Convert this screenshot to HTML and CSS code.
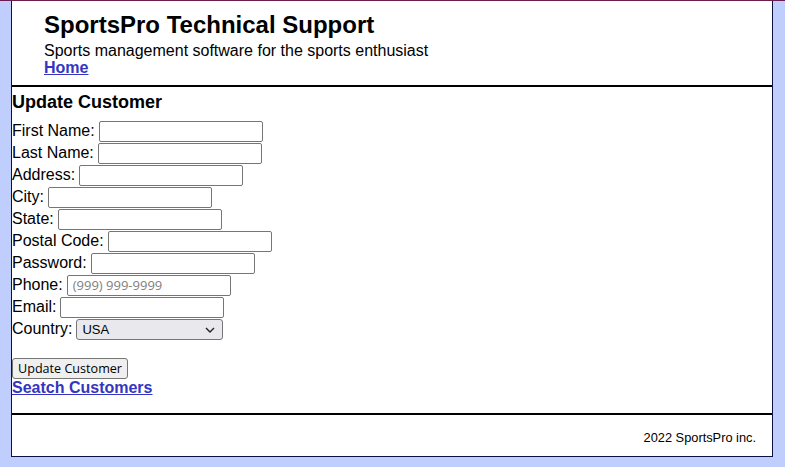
FILE: index.html
```html
<!DOCTYPE html>
<html lang="en">
<head>
<meta charset="utf-8">
<title>SportsPro Technical Support</title>
<link rel="stylesheet" href="styles.css">
</head>
<body>
<div class="page">
  <header class="site-header">
    <h1 class="site-title">SportsPro Technical Support</h1>
    <p class="tagline">Sports management software for the sports enthusiast</p>
    <a class="nav-link" href="#">Home</a>
  </header>
  <main class="content">
    <h2 class="page-title">Update Customer</h2>
    <form class="customer-form">
      <div class="row"><label>First Name:</label><input class="field f1" type="text"></div>
      <div class="row"><label>Last Name:</label><input class="field" type="text"></div>
      <div class="row"><label>Address:</label><input class="field" type="text"></div>
      <div class="row"><label>City:</label><input class="field" type="text"></div>
      <div class="row"><label>State:</label><input class="field" type="text"></div>
      <div class="row"><label>Postal Code:</label><input class="field" type="text"></div>
      <div class="row"><label>Password:</label><input class="field" type="password"></div>
      <div class="row"><label>Phone:</label><input class="field" type="text" placeholder="(999) 999-9999"></div>
      <div class="row"><label>Email:</label><input class="field" type="text"></div>
      <div class="row"><label>Country:</label>
        <span class="select-wrap">
          <select class="select"><option>USA</option></select>
          <svg class="chevron" width="10" height="6" viewBox="0 0 10 6"><path d="M1 1 L5 5 L9 1" fill="none" stroke="#222" stroke-width="1.4"/></svg>
        </span>
      </div>
      <button class="submit" type="button">Update Customer</button>
    </form>
    <a class="nav-link search-link" href="#">Seatch Customers</a>
  </main>
  <footer class="site-footer">
    <p class="copyright">2022 SportsPro inc.</p>
  </footer>
</div>
</body>
</html>
```

FILE: styles.css
```css
html, body {
  margin: 0;
  padding: 0;
}

body {
  background: #bfcefd;
  border-top: 1px solid #6d1c4e;
  font-family: "Liberation Sans", Arial, sans-serif;
  font-size: 16px;
  color: #000;
  height: 466px;
  overflow: hidden;
}

.page {
  margin-left: 11px;
  width: 760px;
  background: #fff;
  border: 1px solid #0b1240;
  border-top: none;
}

.site-header {
  padding: 10px 0 8px 32px;
  border-bottom: 2px solid #000;
}

.site-title {
  margin: 0;
  font-size: 24px;
  line-height: 28px;
  font-weight: bold;
}

.tagline {
  margin: 3px 0 0;
  line-height: 17px;
}

.nav-link {
  display: block;
  font-weight: bold;
  color: #3535bf;
  text-decoration: underline;
  line-height: 18px;
}

.content {
  padding: 5px 0 16px 0;
}

.page-title {
  margin: 0 0 7px;
  font-size: 18px;
  line-height: 21px;
  font-weight: bold;
}

.customer-form {
  margin: 0;
}

.row {
  display: flex;
  align-items: center;
  column-gap: 4px;
  height: 22px;
}

.field {
  box-sizing: border-box;
  width: 164px;
  height: 21px;
  margin: 0;
  padding: 1px 5px;
  border: 1px solid #767676;
  border-radius: 2px;
  background: #fff;
  font-family: "Open Sans", "Noto Sans", sans-serif;
  font-size: 13px;
}

.field::placeholder {
  color: #808080;
}

.select-wrap {
  position: relative;
  display: inline-block;
  height: 21px;
}

.select {
  -webkit-appearance: none;
  appearance: none;
  box-sizing: border-box;
  width: 147px;
  height: 21px;
  margin: 0;
  padding: 0 0 0 5px;
  border: 1px solid #767676;
  border-radius: 3px;
  background: #e9e9ed;
  font-family: "Liberation Sans", Arial, sans-serif;
  font-size: 13px;
  color: #000;
}

.chevron {
  position: absolute;
  right: 8px;
  top: 8px;
  pointer-events: none;
}

.submit {
  display: block;
  margin: 18px 0 0;
  height: 21px;
  padding: 0 5px;
  border: 1px solid #767676;
  border-radius: 3px;
  background: #efefef;
  font-family: "Open Sans", "Noto Sans", sans-serif;
  font-size: 12.6px;
  color: #000;
}

.search-link {
  margin-top: 0;
}

.site-footer {
  border-top: 2px solid #000;
  padding: 15px 16px 11px 0;
  text-align: right;
}

.copyright {
  margin: 0;
  font-size: 12.8px;
  line-height: 15px;
}
```
